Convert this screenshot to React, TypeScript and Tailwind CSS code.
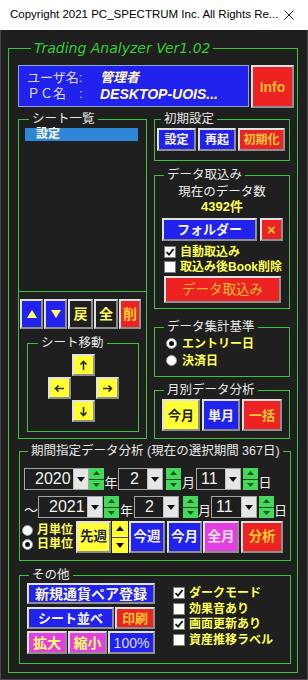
// App.tsx
import React from 'react';

const jp = "font-['Liberation_Sans','Noto_Sans_CJK_JP',sans-serif]";

type Kids = { children?: React.ReactNode };

// groupbox with the caption sitting on the top border
const Group = ({ title, className = '', legendClass = 'ml-[10px]', children }: Kids & { title: string; className?: string; legendClass?: string }) => (
  <fieldset className={`border border-[#3cc43c] ${className}`}>
    <legend className={`px-[3px] text-[12.5px] leading-[16px] text-[#e8e8e8] ${legendClass}`}>{title}</legend>
    {children}
  </fieldset>
);

const Btn = ({ className = '', children }: Kids & { className?: string }) => (
  <div className={`flex shrink-0 items-center justify-center border-2 border-t-[#e2e2e2] border-l-[#e2e2e2] border-r-[#8e8e8e] border-b-[#8e8e8e] font-bold leading-none ${className}`}>
    {children}
  </div>
);

const Check = ({ on }: { on?: boolean }) => (
  <span className="flex h-[12px] w-[12px] shrink-0 items-center justify-center border border-[#7c7c7c] bg-white">
    {on && (
      <svg width="10" height="10" viewBox="0 0 10 10">
        <path d="M1.5 5.2 L4 7.6 L8.6 2" fill="none" stroke="#111" strokeWidth="1.8" />
      </svg>
    )}
  </span>
);

const Radio = ({ on }: { on?: boolean }) => (
  <span className="flex h-[11px] w-[11px] shrink-0 items-center justify-center rounded-full border border-[#9a9a9a] bg-white">
    {on && <span className="h-[5px] w-[5px] rounded-full bg-[#111]" />}
  </span>
);

const Tri = ({ down, color, w = 7, h = 4 }: { down?: boolean; color: string; w?: number; h?: number }) => (
  <svg width={w} height={h} viewBox={`0 0 ${w} ${h}`}>
    <path d={down ? `M0 0H${w}L${w / 2} ${h}Z` : `M0 ${h}H${w}L${w / 2} 0Z`} fill={color} />
  </svg>
);

const Combo = ({ value, className, pad }: { value: string; className: string; pad: string }) => (
  <div className={`flex h-[22px] shrink-0 border border-[#a4a4a4] bg-[#1e1e1e] ${className}`}>
    <div className={`flex flex-1 items-center text-[16px] leading-none text-[#f2f2f2] ${pad}`}>{value}</div>
    <div className="flex w-[15px] items-center justify-center border-l border-[#c4c4c4] bg-[#e6e6e6]">
      <Tri down color="#111" w={8} h={5} />
    </div>
  </div>
);

const Spin = ({ className = '' }: { className?: string }) => (
  <div className={`flex h-[22px] w-[15px] shrink-0 flex-col gap-[1px] bg-[#1a4a1a] ${className}`}>
    <div className="flex flex-1 items-center justify-center bg-[#46d85c]"><Tri color="#0e5c1c" /></div>
    <div className="flex flex-1 items-center justify-center bg-[#46d85c]"><Tri down color="#0e5c1c" /></div>
  </div>
);

const Unit = ({ text, className }: { text: string; className: string }) => (
  <span className={`shrink-0 self-end text-center text-[13px] leading-[14px] text-[#eeeeee] ${className}`}>{text}</span>
);

const Arrow = ({ rot }: { rot: number }) => (
  <svg width="11" height="11" viewBox="0 0 11 11" style={{ transform: `rotate(${rot}deg)` }}>
    <path d="M5.5 10V1.5M2.5 4.5L5.5 1.5L8.5 4.5" fill="none" stroke="#2a2a2a" strokeWidth="1.6" />
  </svg>
);

const Yel = ({ children }: Kids) => <span className="text-[12px] font-bold leading-none text-[#ffff55]">{children}</span>;

export default function App() {
  return (
    <div className={`flex h-[680px] w-[308px] flex-col overflow-hidden bg-[#1f1f1f] ${jp}`}>
      <div className="flex h-[30px] shrink-0 items-center justify-between bg-white pl-[10px] pr-[14px]">
        <span className="font-['Liberation_Sans',sans-serif] text-[11.5px] text-black">Copyright 2021 PC_SPECTRUM Inc. All Rights Re...</span>
        <svg width="10" height="10" viewBox="0 0 10 10">
          <path d="M0.5 0.5L9.5 9.5M9.5 0.5L0.5 9.5" stroke="#222" strokeWidth="1" />
        </svg>
      </div>

      <div className="flex-1 border-x border-b border-[#4a4a4a] pl-[7px]">
        <fieldset className="mt-[8px] h-[635px] w-[290px] border border-[#3cc43c] pl-[9px]">
          <legend className="ml-[13px] px-[3px] font-['DejaVu_Sans',sans-serif] text-[14px] italic leading-[20px] text-[#36cc36]">
            Trading Analyzer Ver1.02
          </legend>

          {/* user / info */}
          <div className="mt-[7px] flex gap-[2px]">
            <div className="flex h-[42px] w-[231px] flex-col justify-center border border-[#86a6d6] bg-[#2222ee] pl-[8px]">
              <div className="flex h-[16px] items-center">
                <span className="w-[73px] text-[13px] text-[#dcdcf2]">ユーザ名:</span>
                <span className="text-[13px] font-bold italic text-[#fff6c6]">管理者</span>
              </div>
              <div className="flex h-[16px] items-center">
                <span className="w-[73px] text-[13px] text-[#dcdcf2]">ＰＣ名　:</span>
                <span className="text-[14px] font-bold italic text-[#fff8d8]">DESKTOP-UOIS...</span>
              </div>
            </div>
            <Btn className="h-[43px] w-[43px] bg-[#ee2222] text-[14px] text-[#ffbb33]">Info</Btn>
          </div>

          <div className="mt-[3px] flex items-start gap-[7px]">
            {/* left column */}
            <Group title="シート一覧" className="flex h-[328px] w-[129px] flex-col">
              <div className="h-[165px] border-b border-[#3cc43c] pt-[1px]">
                <div className="ml-[6px] mr-[8px] h-[13px] bg-[#2f86d6] pl-[11px] text-[12px] font-bold leading-[13px] text-white">設定</div>
              </div>
              <div className="ml-[1px] mt-[7px] flex h-[30px] gap-[1px]">
                <Btn className="w-[23px] bg-[#2222ee]"><Tri color="#ffff66" w={10} h={8} /></Btn>
                <Btn className="w-[23px] bg-[#2222ee]"><Tri down color="#ffff66" w={10} h={8} /></Btn>
                <Btn className="w-[25px] bg-[#1f1f1f] text-[14px] text-[#ffff55]">戻</Btn>
                <Btn className="w-[24px] bg-[#1f1f1f] text-[14px] text-[#ffff55]">全</Btn>
                <Btn className="w-[22px] bg-[#ee2222] text-[14px] text-[#ffcc33]">削</Btn>
              </div>
              <Group title="シート移動" className="ml-[8px] mt-[6px] h-[97px] w-[112px]">
                <div className="mt-[3px] grid grid-cols-[23px_23px_23px] grid-rows-[22px_22px_22px] justify-center gap-[1px]">
                  <span />
                  <Btn className="bg-[#ffff33]"><Arrow rot={0} /></Btn>
                  <span />
                  <Btn className="bg-[#ffff33]"><Arrow rot={-90} /></Btn>
                  <span />
                  <Btn className="bg-[#ffff33]"><Arrow rot={90} /></Btn>
                  <span />
                  <Btn className="bg-[#ffff33]"><Arrow rot={180} /></Btn>
                  <span />
                </div>
              </Group>
            </Group>

            {/* right column */}
            <div className="flex w-[136px] flex-col">
              <Group title="初期設定" className="h-[50px]" legendClass="ml-[6px]">
                <div className="flex gap-[2px] pl-[2px] pt-[1px]">
                  <Btn className="h-[23px] w-[39px] bg-[#2222ee] text-[12px] text-[#f6f6f0]">設定</Btn>
                  <Btn className="h-[23px] w-[38px] bg-[#2222ee] text-[12px] text-[#f6f6f6]">再起</Btn>
                  <Btn className="h-[23px] w-[47px] bg-[#ee2222] text-[12px] text-[#ffcc44]">初期化</Btn>
                </div>
              </Group>

              <Group title="データ取込み" className="mt-[6px] h-[142px]" legendClass="ml-[9px]">
                <div className="mt-[1px] text-center text-[12.5px] leading-[16px] text-[#eeeeee]">現在のデータ数</div>
                <div className="text-center text-[13px] font-bold leading-[14px] text-[#ffff55]">4392件</div>
                <div className="mt-[4px] flex gap-[3px] pl-[7px]">
                  <Btn className="h-[23px] w-[95px] bg-[#2222ee] text-[13px] text-[#f4f4f4]">フォルダー</Btn>
                  <Btn className="h-[23px] w-[23px] bg-[#ee2222] text-[15px] text-[#ffcc33]">×</Btn>
                </div>
                <div className="mt-[3px] flex h-[15px] items-center gap-[4px] pl-[9px]">
                  <Check on />
                  <Yel>自動取込み</Yel>
                </div>
                <div className="flex h-[15px] items-center gap-[4px] pl-[9px]">
                  <Check />
                  <Yel>取込み後Book削除</Yel>
                </div>
                <Btn className="ml-[9px] mt-[2px] h-[27px] w-[117px] bg-[#ee2222] text-[13.5px] !font-normal text-[#ffbb33]">データ取込み</Btn>
              </Group>

              <Group title="データ集計基準" className="mt-[10px] h-[58px]" legendClass="ml-[9px]">
                <div className="flex h-[17px] items-center gap-[5px] pl-[11px]">
                  <Radio on />
                  <Yel>エントリー日</Yel>
                </div>
                <div className="flex h-[17px] items-center gap-[5px] pl-[11px]">
                  <Radio />
                  <Yel>決済日</Yel>
                </div>
              </Group>

              <Group title="月別データ分析" className="mt-[5px] h-[57px]" legendClass="ml-[9px]">
                <div className="flex gap-[2px] pl-[7px] pt-[1px]">
                  <Btn className="h-[32px] w-[38px] bg-[#ffff33] text-[13px] text-[#222222]">今月</Btn>
                  <Btn className="h-[32px] w-[38px] bg-[#2222ee] text-[13px] text-[#f4f4f4]">単月</Btn>
                  <Btn className="h-[32px] w-[40px] bg-[#ee2222] text-[13px] text-[#ffcc33]">一括</Btn>
                </div>
              </Group>
            </div>
          </div>

          {/* period analysis */}
          <Group title="期間指定データ分析 (現在の選択期間 367日)" className="ml-[1px] mt-[4px] h-[118px] w-[272px]" legendClass="ml-[8px]">
            <div className="mt-[9px] flex h-[22px] pl-[4px]">
              <Combo value="2020" className="w-[65px]" pad="pl-[10px]" />
              <Spin />
              <Unit text="年" className="w-[14px]" />
              <Combo value="2" className="w-[45px]" pad="pl-[11px]" />
              <Spin className="ml-[3px]" />
              <Unit text="月" className="w-[15px]" />
              <Combo value="11" className="w-[45px]" pad="pl-[4px]" />
              <Spin className="ml-[2px]" />
              <Unit text="日" className="w-[14px]" />
            </div>
            <div className="mt-[6px] flex h-[22px] pl-[4px]">
              <span className="w-[14px] shrink-0 self-end text-[14px] leading-[16px] text-[#eeeeee]">～</span>
              <Combo value="2021" className="w-[65px]" pad="pl-[10px]" />
              <Spin className="ml-[1px]" />
              <Unit text="年" className="w-[15px]" />
              <Combo value="2" className="w-[45px]" pad="pl-[10px]" />
              <Spin className="ml-[4px]" />
              <Unit text="月" className="w-[13px]" />
              <Combo value="11" className="w-[46px]" pad="pl-[4px]" />
              <Spin className="ml-[2px]" />
              <Unit text="日" className="w-[13px]" />
            </div>
            <div className="mt-[3px] flex h-[32px] pl-[2px]">
              <div className="flex w-[52px] shrink-0 flex-col justify-center">
                <div className="flex h-[14px] items-center gap-[4px]">
                  <Radio />
                  <Yel>月単位</Yel>
                </div>
                <div className="flex h-[14px] items-center gap-[4px]">
                  <Radio on />
                  <Yel>日単位</Yel>
                </div>
              </div>
              <Btn className="ml-[2px] w-[35px] bg-[#ffff33] text-[13.5px] text-[#1c1c5a]">先週</Btn>
              <div className="ml-[1px] flex w-[16px] shrink-0 flex-col gap-[1px] bg-[#555]">
                <div className="flex flex-1 items-center justify-center bg-[#ffff33]"><Tri color="#111" w={8} h={5} /></div>
                <div className="flex flex-1 items-center justify-center bg-[#ffff33]"><Tri down color="#111" w={8} h={5} /></div>
              </div>
              <Btn className="ml-[1px] w-[36px] bg-[#2222ee] text-[13.5px] text-[#f4f4f4]">今週</Btn>
              <Btn className="ml-[2px] w-[35px] bg-[#2222ee] text-[13.5px] text-[#f4f4f4]">今月</Btn>
              <Btn className="ml-[1px] w-[36px] bg-[#e23ee2] text-[13.5px] text-[#ffe0ff]">全月</Btn>
              <Btn className="ml-[2px] w-[42px] bg-[#ee2222] text-[13.5px] text-[#ffcc33]">分析</Btn>
            </div>
          </Group>

          {/* misc */}
          <Group title="その他" className="ml-[1px] mt-[6px] h-[97px] w-[272px]" legendClass="ml-[9px]">
            <div className="flex pl-[7px]">
              <div className="flex w-[128px] shrink-0 flex-col">
                <Btn className="h-[21px] w-[128px] bg-[#2222ee] text-[14px] text-[#f4f2da]">新規通貨ペア登録</Btn>
                <div className="mt-[3px] flex h-[22px] gap-[1px]">
                  <Btn className="w-[87px] bg-[#2222ee] text-[13px] text-[#f4f4f4]">シート並べ</Btn>
                  <Btn className="w-[40px] bg-[#ee2222] text-[13px] text-[#ffcc33]">印刷</Btn>
                </div>
                <div className="mt-[2px] flex h-[23px] gap-[1px]">
                  <Btn className="w-[40px] bg-[#e23ee2] text-[14px] text-[#ffff66]">拡大</Btn>
                  <Btn className="w-[39px] bg-[#e23ee2] text-[14px] text-[#ffff66]">縮小</Btn>
                  <Btn className="w-[47px] bg-[#2222ee] font-['Liberation_Sans',sans-serif] text-[14px] !font-normal text-[#dcdcf4]">100%</Btn>
                </div>
              </div>
              <div className="ml-[18px] mt-[2.5px] flex flex-col">
                {[
                  ['ダークモード', true],
                  ['効果音あり', false],
                  ['画面更新あり', true],
                  ['資産推移ラベル', false],
                ].map(([label, on]) => (
                  <div key={label as string} className="flex h-[15.5px] items-center gap-[4px]">
                    <Check on={on as boolean} />
                    <Yel>{label}</Yel>
                  </div>
                ))}
              </div>
            </div>
          </Group>
        </fieldset>
      </div>
    </div>
  );
}
